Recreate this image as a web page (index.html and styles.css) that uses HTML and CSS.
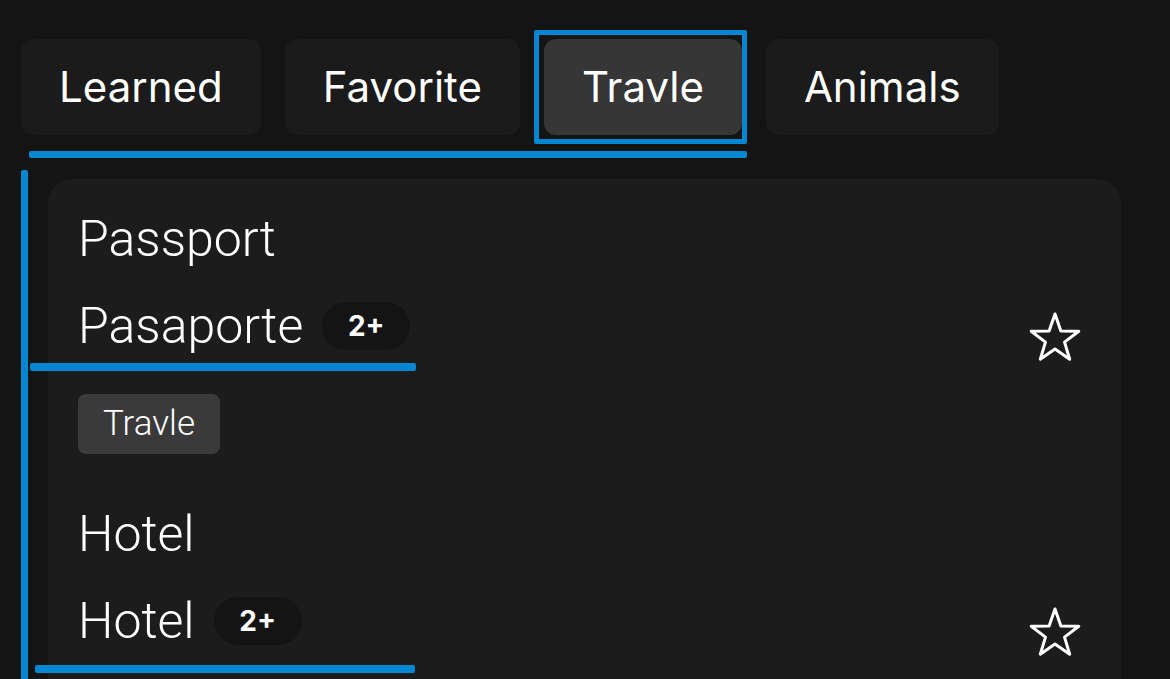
FILE: index.html
```html
<!DOCTYPE html>
<html lang="en">
<head>
    <meta charset="UTF-8">
    <meta name="viewport" content="width=device-width, initial-scale=1.0">
    <title>Words</title>
    <link rel="stylesheet" href="styles.css">
</head>
<body>
    <div class="tabs">
        <button class="tab">Learned</button>
        <button class="tab">Favorite</button>
        <button class="tab active">Travle</button>
        <button class="tab">Animals</button>
    </div>

    <div class="card">
        <!-- Word item -->
        <div class="item">
            <div class="item-body">
                <div class="word">Passport</div>
                <div class="translation">
                    <span>Pasaporte</span>
                    <span class="count">2+</span>
                </div>
                <span class="tag">Travle</span>
            </div>
            <svg class="star" width="56" height="54" viewBox="0 0 56 54">
                <polygon points="28,3 33.88,19.91 51.78,20.27 37.51,31.09 42.69,48.23 28,38 13.31,48.23 18.49,31.09 4.22,20.27 22.12,19.91" fill="none" stroke="#fff" stroke-width="3" stroke-linejoin="round"/>
            </svg>
        </div>

        <div class="item">
            <div class="item-body">
                <div class="word">Hotel</div>
                <div class="translation">
                    <span>Hotel</span>
                    <span class="count">2+</span>
                </div>
                <span class="tag">Travle</span>
            </div>
            <svg class="star" width="56" height="54" viewBox="0 0 56 54">
                <polygon points="28,3 33.88,19.91 51.78,20.27 37.51,31.09 42.69,48.23 28,38 13.31,48.23 18.49,31.09 4.22,20.27 22.12,19.91" fill="none" stroke="#fff" stroke-width="3" stroke-linejoin="round"/>
            </svg>
        </div>
    </div>

    <!-- Highlight marks drawn over the content -->
    <div class="mark focus-box"></div>
    <div class="mark line-tabs"></div>
    <div class="mark line-side"></div>
    <div class="mark line-word1"></div>
    <div class="mark line-word2"></div>
</body>
</html>
```

FILE: styles.css
```css
html, body {
    height: 100%;
}

body {
    position: relative;
    margin: 0;
    padding: 39px 0 0 21px;
    box-sizing: border-box;
    overflow: hidden;
    background-color: #141414;
    color: #fff;
    font-family: Roboto, "Noto Sans", sans-serif;
}

.tabs {
    display: flex;
    gap: 24px;
}

.tab {
    padding: 23px 38px;
    background-color: #1b1b1b;
    color: #fff;
    border: none;
    border-radius: 12px;
    font-family: Inter, "Noto Sans", sans-serif;
    font-size: 42px;
    line-height: 50px;
    cursor: pointer;
}

.tab.active {
    background-color: #363636;
}

.card {
    margin: 44px 49px 0 27px;
    padding: 6px 38px 0 30px;
    background-color: #1c1c1c;
    border-radius: 24px;
}

.item {
    display: flex;
    justify-content: space-between;
    align-items: center;
    padding: 26px 0;
}

.item-body {
    display: flex;
    flex-direction: column;
    align-items: flex-start;
}

.word {
    font-size: 50px;
    font-weight: 300;
    line-height: 56px;
    margin-bottom: 31px;
}

.translation {
    display: flex;
    align-items: center;
    gap: 19px;
    font-size: 50px;
    font-weight: 300;
    line-height: 56px;
}

.count {
    display: flex;
    align-items: center;
    justify-content: center;
    width: 88px;
    height: 48px;
    border-radius: 24px;
    background-color: #141414;
    font-family: Inter, "Noto Sans", sans-serif;
    font-size: 28px;
    font-weight: 700;
    line-height: 1;
}

.tag {
    margin-top: 40px;
    padding: 0 25px;
    height: 60px;
    line-height: 60px;
    border-radius: 8px;
    background-color: #3a3a3a;
    font-size: 35px;
    font-weight: 300;
}

.star {
    margin-top: 10px;
}

.mark {
    position: absolute;
    background-color: #0288d1;
    border-radius: 2px;
}

.focus-box {
    left: 534px;
    top: 30px;
    width: 203px;
    height: 104px;
    background: none;
    border: 5px solid #0288d1;
}

.line-tabs {
    left: 29px;
    top: 151px;
    width: 718px;
    height: 7px;
}

.line-side {
    left: 21px;
    top: 170px;
    width: 7px;
    height: 520px;
}

.line-word1 {
    left: 30px;
    top: 363px;
    width: 386px;
    height: 8px;
}

.line-word2 {
    left: 35px;
    top: 665px;
    width: 380px;
    height: 8px;
}
```
